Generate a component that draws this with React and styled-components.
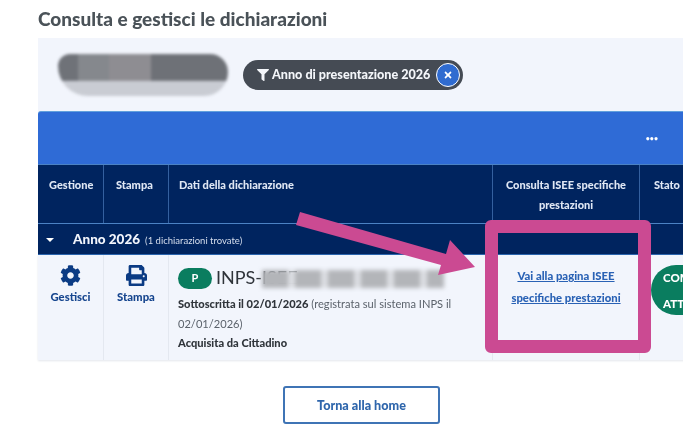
import React from 'react';
import styled, { createGlobalStyle } from 'styled-components';
import { FaCog, FaPrint, FaFilter, FaTimes } from 'react-icons/fa';

const GlobalStyle = createGlobalStyle`
  html, body {
    margin: 0;
    padding: 0;
    background: #fff;
    overflow: hidden;
  }
  * {
    box-sizing: border-box;
  }
`;

const Page = styled.div`
  position: relative;
  width: 683px;
  height: 437px;
  overflow: hidden;
  padding: 7px 0 0 38px;
  font-family: Lato, 'Liberation Sans', sans-serif;
  filter: blur(0.35px);
`;

const Title = styled.h2`
  margin: 0 0 8px;
  height: 23px;
  font-size: 19px;
  line-height: 23px;
  font-weight: 900;
  color: #4a5258;
`;

const Panel = styled.div`
  width: 720px;
  background: #f2f5fc;
`;

const FilterBar = styled.div`
  height: 73px;
  display: flex;
  align-items: center;
  gap: 15px;
  padding: 0 0 0 20px;
`;

const Redacted = styled.div`
  width: 170px;
  height: 42px;
  border-radius: 12px 18px 24px 30px;
  background:
    linear-gradient(90deg, #6f7278 0 12%, #85888d 12% 30%, #8e8d92 30% 55%, #6e7177 55% 100%) top / 100% 64% no-repeat,
    #c9ccd3;
  filter: blur(1.6px);
`;

const Chip = styled.div`
  width: 220px;
  height: 30px;
  padding: 0 3px 0 14px;
  display: flex;
  align-items: center;
  gap: 3px;
  border-radius: 15px;
  background: #454b54;
  color: #f4f6fa;
  font-size: 12.6px;
  font-weight: 900;
  white-space: nowrap;
`;

const ChipClose = styled.span`
  margin-left: auto;
  width: 24px;
  height: 24px;
  display: flex;
  align-items: center;
  justify-content: center;
  border-radius: 50%;
  border: 1px solid #fff;
  background: #2f6bd0;
  color: #fff;
  font-size: 10px;
`;

const BlueBar = styled.div`
  height: 53px;
  width: 720px;
  padding: 0 100px 0 0;
  display: flex;
  align-items: center;
  justify-content: flex-end;
  background: #2f6bd6;
  border-radius: 3px 3px 0 0;
  border-top: 1px solid #62a0dc;
  color: #fff;
  font-size: 7px;
  font-weight: 700;
  letter-spacing: 0;
`;

const columns = '66px 65px 324px 147px 1fr';

const HeadRow = styled.div`
  display: grid;
  grid-template-columns: ${columns};
  height: 60px;
  background: #00245f;
  border-top: 1px solid #4b82c4;
  border-bottom: 1px solid #4b82c4;
`;

const HeadCell = styled.div`
  padding: ${(p) => (p.$center ? '10px 6px 0' : `10px 0 0 ${p.$left || 11}px`)};
  text-align: ${(p) => (p.$center ? 'center' : 'left')};
  font-size: 11px;
  line-height: 20px;
  font-weight: 900;
  color: #dfe7f4;
  border-right: 1px solid #34609f;
`;

const GroupRow = styled.div`
  height: 31px;
  padding: 0 0 0 8px;
  display: flex;
  align-items: center;
  gap: 5px;
  background: #00245f;
  color: #f2f5fc;
  border-bottom: 1px solid #1c5aa8;
`;

const Caret = styled.span`
  width: 0;
  height: 0;
  margin: 2px 14px 0 0;
  border-left: 4px solid transparent;
  border-right: 4px solid transparent;
  border-top: 4px solid #fff;
`;

const GroupTitle = styled.strong`
  font-size: 13.5px;
  font-weight: 900;
`;

const GroupNote = styled.span`
  font-size: 9.5px;
  color: #d5deed;
  margin-top: 2px;
`;

const DataRow = styled.div`
  display: grid;
  grid-template-columns: ${columns};
  height: 105px;
  box-shadow: 0 1px 2px #e3e6ec;
`;

const ActionCell = styled.div`
  padding-top: 10px;
  display: flex;
  flex-direction: column;
  align-items: center;
  gap: 4px;
  border-right: 1px solid #e4e8f0;
  color: #17468f;
  font-size: 11.3px;
  font-weight: 900;
  svg {
    font-size: 21px;
    color: #0b3b84;
  }
`;

const DetailCell = styled.div`
  padding: 12px 0 0 9px;
  border-right: 1px solid #e4e8f0;
  font-size: 11.1px;
  line-height: 19.5px;
  color: #5b626b;
`;

const NameLine = styled.div`
  position: relative;
  display: flex;
  align-items: center;
  gap: 4px;
  height: 22px;
  margin-bottom: 5px;
  font-size: 18px;
  color: #2f343a;
`;

const Badge = styled.span`
  width: 34px;
  height: 21px;
  display: flex;
  align-items: center;
  justify-content: center;
  border-radius: 11px;
  background: #0a7d5f;
  color: #fff;
  font-size: 11px;
  font-weight: 700;
`;

const NameSmudge = styled.span`
  position: absolute;
  left: 84px;
  top: 3px;
  width: 182px;
  height: 18px;
  background: repeating-linear-gradient(90deg, #b3b5b9 0 26px, #dcdee3 26px 33px);
  filter: blur(2.2px);
`;

const Strong = styled.strong`
  color: #30353b;
  font-weight: 900;
`;

const LinkCell = styled.div`
  padding: 9px 10px 0;
  text-align: center;
  border-right: 1px solid #e4e8f0;
`;

const PageLink = styled.a`
  color: #2a62b5;
  font-size: 11.3px;
  line-height: 20px;
  font-weight: 900;
  text-decoration: underline;
`;

const StateCell = styled.div`
  padding: 10px 0 0 11px;
`;

const StatePill = styled.div`
  width: 90px;
  height: 50px;
  padding: 0 0 0 12px;
  border-radius: 25px;
  background: #0a7d5f;
  color: #fff;
  font-size: 11.5px;
  line-height: 26px;
  font-weight: 900;
  white-space: nowrap;
`;

const Footer = styled.div`
  width: 645px;
  padding: 26px 0 0 245px;
`;

const HomeButton = styled.button`
  width: 157px;
  height: 38px;
  border: 2px solid #3f74b5;
  border-radius: 3px;
  background: #fff;
  color: #2f66ac;
  font-family: inherit;
  font-size: 12.6px;
  font-weight: 900;
`;

const Highlight = styled.div`
  position: absolute;
  left: 485px;
  top: 220px;
  width: 166px;
  height: 133px;
  border: 13px solid #cb4a92;
  border-radius: 6px;
`;

const Arrow = styled.svg`
  position: absolute;
  left: 0;
  top: 0;
  pointer-events: none;
`;

export default function App() {
  return (
    <Page>
      <GlobalStyle />
      <Title>Consulta e gestisci le dichiarazioni</Title>
      <Panel>
        <FilterBar>
          <Redacted />
          <Chip>
            <FaFilter size={12} />
            Anno di presentazione 2026
            <ChipClose>
              <FaTimes />
            </ChipClose>
          </Chip>
        </FilterBar>
        <BlueBar>•••</BlueBar>
        <HeadRow>
          <HeadCell>Gestione</HeadCell>
          <HeadCell $left={12}>Stampa</HeadCell>
          <HeadCell $left={10}>Dati della dichiarazione</HeadCell>
          <HeadCell $center>Consulta ISEE specifiche prestazioni</HeadCell>
          <HeadCell $left={14}>Stato</HeadCell>
        </HeadRow>
        <GroupRow>
          <Caret />
          <GroupTitle>Anno 2026</GroupTitle>
          <GroupNote>(1 dichiarazioni trovate)</GroupNote>
        </GroupRow>
        <DataRow>
          <ActionCell>
            <FaCog />
            Gestisci
          </ActionCell>
          <ActionCell>
            <FaPrint />
            Stampa
          </ActionCell>
          <DetailCell>
            <NameLine>
              <Badge>P</Badge>
              INPS-ISEE
              <NameSmudge />
            </NameLine>
            <div>
              <Strong>Sottoscritta il 02/01/2026</Strong> (registrata sul sistema INPS il 02/01/2026)
            </div>
            <Strong>Acquisita da Cittadino</Strong>
          </DetailCell>
          <LinkCell>
            <PageLink href="#">Vai alla pagina ISEE specifiche prestazioni</PageLink>
          </LinkCell>
          <StateCell>
            <StatePill>
              COMPLETATA
              <br />
              ATTESTATA
            </StatePill>
          </StateCell>
        </DataRow>
      </Panel>
      <Footer>
        <HomeButton>Torna alla home</HomeButton>
      </Footer>
      <Highlight />
      <Arrow width="683" height="437" viewBox="0 0 683 437">
        <polygon
          points="300,212 446,254 450,240 475,267 438,275 441,265 296,225"
          fill="#cb4a92"
        />
      </Arrow>
    </Page>
  );
}
